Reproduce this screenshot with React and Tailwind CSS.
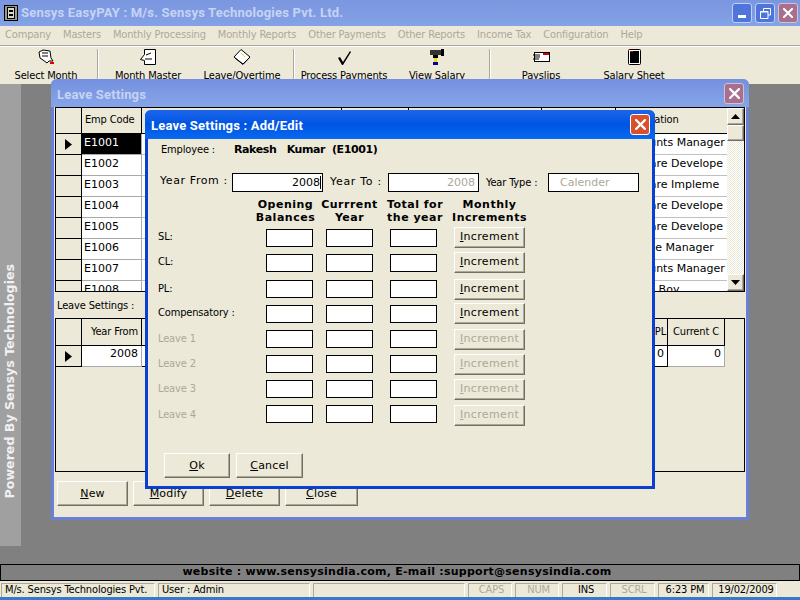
import React from 'react';

const ui = "font-['DejaVu_Sans_Condensed','Roboto',sans-serif] tracking-[-0.15px]";
const dv = "font-['DejaVu_Sans',sans-serif]";
const head = "font-['Roboto',sans-serif] font-bold text-[13px]";

const raised = 'bg-[#ece9d8] border border-t-white border-l-white border-r-[#716f64] border-b-[#716f64] shadow-[inset_-1px_-1px_0_#aca899]';

// toolbar icons, drawn by hand
const IconSelectMonth = () => (
  <svg width="17" height="16" viewBox="0 0 17 16">
    <path d="M1 3 L5 1 L12 2 L13 9 L15 12 L11 12 L9 14 L5 11 L2 9 Z" fill="#fff" stroke="#000" />
    <path d="M4 4 L10 4 M4 7 L10 7" stroke="#000" />
    <rect x="12" y="13" width="4" height="2" fill="#e00000" />
  </svg>
);
const IconMonthMaster = () => (
  <svg width="17" height="16" viewBox="0 0 17 16">
    <path d="M4.5 .5 H15.5 V15.5 H4.5 V11.5 L.5 10.5 L4.5 5.5 Z" fill="#fff" stroke="#000" />
    <path d="M6 6 L11 4 M5 10 H12" stroke="#000" />
  </svg>
);
const IconLeave = () => (
  <svg width="18" height="16" viewBox="0 0 18 16">
    <path d="M8 .5 L17 8 L10 15.5 L1 8 Z" fill="#fff" stroke="#000" />
    <path d="M2 9 L10 15 L16 9" fill="none" stroke="#000" />
    <path d="M8 4 L12 8" stroke="#e8e000" />
  </svg>
);
const IconCheck = () => (
  <svg width="15" height="15" viewBox="0 0 15 15">
    <path d="M1 8 L3 7 L6 12 L13 1 L14 2 L6 15 L5 15 Z" fill="#000" />
  </svg>
);
const IconViewSalary = () => (
  <svg width="15" height="17" viewBox="0 0 15 17">
    <rect x="0" y="1" width="11" height="5" fill="#333" />
    <rect x="11" y="0" width="3" height="7" fill="#000" />
    <rect x="3" y="6" width="5" height="3" fill="#000" />
    <rect x="4" y="9" width="3" height="4" fill="#f0e000" />
    <rect x="3" y="13" width="5" height="3" fill="#0000a0" />
  </svg>
);
const IconPayslips = () => (
  <svg width="17" height="10" viewBox="0 0 17 10">
    <rect x="1.5" y=".5" width="15" height="9" fill="#fff" stroke="#000" />
    <rect x="10" y="1" width="6" height="2" fill="#d00000" />
    <path d="M0 3 H7 M1 5 H7 M0 7 H6" stroke="#000" />
  </svg>
);
const IconSalarySheet = () => (
  <svg width="13" height="16" viewBox="0 0 13 16">
    <rect x=".5" y=".5" width="12" height="15" rx="1" fill="#fff" stroke="#000" />
    <rect x="2" y="2" width="9" height="12" fill="#000" />
    <rect x="2" y="2" width="3" height="1" fill="#e00000" />
  </svg>
);
const IconApp = () => (
  <svg width="14" height="16" viewBox="0 0 14 16">
    <rect x=".5" y=".5" width="13" height="15" fill="#9a9a8c" stroke="#000" />
    <rect x="3.5" y="2.5" width="7" height="11" fill="#d8d8c8" stroke="#000" />
    <path d="M5 6 H9 M5 10 H9" stroke="#000" strokeWidth="2" />
  </svg>
);

const WinX = ({ size = 10 }) => (
  <svg width={size} height={size} viewBox="0 0 10 10">
    <path d="M1 1 L9 9 M9 1 L1 9" stroke="#fff" strokeWidth="2" strokeLinecap="square" />
  </svg>
);

const toolbar = [
  { w: 'w-[92px]', label: 'Select Month', icon: <IconSelectMonth /> },
  { sep: true, w: 'ml-[5px] mr-[1px]' },
  { w: 'w-[96px]', label: 'Month Master', icon: <IconMonthMaster /> },
  { w: 'w-[92px]', label: 'Leave/Overtime', icon: <IconLeave /> },
  { sep: true, w: 'ml-[5px] mr-[1px]' },
  { w: 'w-[96px]', label: 'Process Payments', icon: <IconCheck /> },
  { w: 'w-[90px]', label: 'View Salary', icon: <IconViewSalary /> },
  { sep: true, w: 'ml-[7px] mr-[1px]' },
  { w: 'w-[98px]', label: 'Payslips', icon: <IconPayslips /> },
  { w: 'w-[88px]', label: 'Salary Sheet', icon: <IconSalarySheet /> },
];

const menus = ['Company', 'Masters', 'Monthly Processing', 'Monthly Reports', 'Other Payments', 'Other Reports', 'Income Tax', 'Configuration', 'Help'];

// the grid cuts long designations off, so they are kept as shown
const employees = [
  ['E1001', 'Accounts Manager', 'pl-[7px]'],
  ['E1002', 'Software Develope', 'pl-[3px]'],
  ['E1003', 'Software Impleme', 'pl-[3px]'],
  ['E1004', 'Software Develope', 'pl-[3px]'],
  ['E1005', 'Software Develope', 'pl-[3px]'],
  ['E1006', 'Office Manager', 'pl-[14px]'],
  ['E1007', 'Accounts Manager', 'pl-[7px]'],
  ['E1008', 'Office Boy', 'pl-[7px]'],
];

const leaveRows = [
  { label: 'SL:', row: 'mt-[3px]', box: 'mt-[2px]', on: true },
  { label: 'CL:', row: 'mt-[4px]', box: 'mt-[2px]', on: true },
  { label: 'PL:', row: 'mt-[6px]', box: 'mt-[1px]', on: true },
  { label: 'Compensatory :', row: 'mt-[3px]', box: 'mt-[2px]', on: true },
  { label: 'Leave 1', row: 'mt-[5px]', box: 'mt-[1px]' },
  { label: 'Leave 2', row: 'mt-[4px]', box: 'mt-[1px]' },
  { label: 'Leave 3', row: 'mt-[4px]', box: 'mt-[1px]' },
  { label: 'Leave 4', row: 'mt-[5px]', box: 'mt-0' },
];

const Arrow = () => (
  <svg width="7" height="11" viewBox="0 0 7 11"><path d="M0 0 L7 5.5 L0 11 Z" fill="#000" /></svg>
);

const Btn = ({ k, rest, className }) => (
  <button className={`${raised} ${dv} text-[11px] tracking-[0.2px] text-black flex items-center justify-center pt-[2px] ${className}`}>
    <span><u>{k}</u>{rest}</span>
  </button>
);

const HeadCell = ({ className, children }) => (
  <div className={`${ui} text-[11px] border-r border-black flex items-center ${className}`}>{children}</div>
);

export default function App() {
  return (
    <div className="relative w-[800px] h-[600px] overflow-hidden flex flex-col bg-[#808080]">
      {/* main title bar */}
      <div className="h-[26px] flex items-center bg-gradient-to-b from-[#7a96df] to-[#84a2e6] pl-[4px] pr-[2px]">
        <IconApp />
        <span className={`${head} ml-[3px] text-[#c6d3f4] tracking-[0.2px]`}>Sensys EasyPAY : M/s. Sensys Technologies Pvt. Ltd.</span>
        <div className="ml-auto flex gap-[3px]">
          <div className="w-[20px] h-[20px] rounded-[3px] border border-[#c0d0f0] bg-[#4f74dc] flex items-end justify-center pb-[4px]">
            <div className="w-[8px] h-[3px] bg-white" />
          </div>
          <div className="w-[20px] h-[20px] rounded-[3px] border border-[#c0d0f0] bg-[#4f74dc] flex items-center justify-center">
            <svg width="11" height="11" viewBox="0 0 11 11"><path d="M3.5 3 V.5 H10.5 V7 H8 M.5 3.5 H8 V10.5 H.5 Z M.5 4 H8" fill="none" stroke="#fff" /></svg>
          </div>
          <div className="w-[20px] h-[20px] rounded-[3px] border border-[#d8c0c8] bg-[#a7708f] flex items-center justify-center">
            <WinX />
          </div>
        </div>
      </div>

      {/* menu */}
      <div className={`${ui} h-[19px] bg-[#ece9d8] flex items-center gap-[12px] pl-[5px] text-[11px] text-[#aca899]`}>
        {menus.map(m => <span key={m}>{m}</span>)}
      </div>
      <div className="h-[2px] bg-[#ece9d8] border-t border-[#aca899] shadow-[inset_0_1px_0_#fff]" />

      {/* toolbar */}
      <div className="h-[37px] bg-[#ece9d8] flex">
        {toolbar.map((t, i) => t.sep ? (
          <div key={i} className={`w-[2px] h-[33px] mt-[2px] border-l border-[#aca899] border-r border-r-white ${t.w}`} />
        ) : (
          <div key={i} className={`${t.w} flex flex-col items-center`}>
            <div className="h-[20px] flex items-center justify-center mt-[2px]">{t.icon}</div>
            <span className={`${ui} text-[11px] text-black whitespace-nowrap mt-[2px]`}>{t.label}</span>
          </div>
        ))}
      </div>

      {/* desktop */}
      <div className="flex-1">
        <div className="w-[21px] h-[462px] bg-[#a0a0a0] flex items-end justify-center pb-[48px] pr-[1px]">
          <span className={`${dv} [writing-mode:vertical-rl] rotate-180 text-[12.6px] font-bold text-[#f0f0f0] whitespace-nowrap`}>Powered By Sensys Technologies</span>
        </div>
      </div>

      {/* website line */}
      <div className={`${dv} h-[17px] border border-black bg-[#808080] flex items-center justify-center pr-[6px] text-[11px] font-bold text-black tracking-[0.25px]`}>
        website : www.sensysindia.com, E-mail :support@sensysindia.com
      </div>

      {/* status bar */}
      <div className={`${ui} h-[16px] bg-[#ece9d8] flex gap-[3px] pl-[1px] pt-[2px] text-[11px] text-black`}>
        {[
          ['w-[154px]', 'M/s. Sensys Technologies Pvt.', ''],
          ['w-[152px]', 'User : Admin', ''],
          ['w-[152px]', '', ''],
          ['w-[44px] justify-center', 'CAPS', 'text-[#aca899]'],
          ['w-[44px] justify-center', 'NUM', 'text-[#aca899]'],
          ['w-[45px] justify-center', 'INS', ''],
          ['w-[45px] justify-center', 'SCRL', 'text-[#aca899]'],
          ['w-[51px] justify-center', '6:23 PM', ''],
          ['w-[65px] justify-center', '19/02/2009', ''],
        ].map(([w, text, color], i) => (
          <div key={i} className={`${w} ${color} h-[14px] flex items-center pl-[3px] border-t border-l border-[#aca899] border-r border-r-white overflow-hidden whitespace-nowrap`}>{text}</div>
        ))}
      </div>
      <div className="h-[3px] bg-[#3a78c8]" />

      {/* Leave Settings window */}
      <div className="absolute left-[51px] top-[79px] w-[698px] h-[441px] flex flex-col rounded-t-[6px] border-x-[3px] border-b-[3px] border-[#6a80d8] bg-[#ece9d8]">
        <div className="-mx-[3px] h-[28px] shrink-0 flex items-center justify-between rounded-t-[6px] bg-gradient-to-b from-[#7590e0] to-[#86a5e8] pl-[6px] pr-[5px]">
          <span className={`${head} pt-[3px] text-[#c6d3f4] tracking-[0.2px]`}>Leave Settings</span>
          <div className="w-[20px] h-[21px] rounded-[3px] border border-[#d8c0c8] bg-[#a7708f] flex items-center justify-center"><WinX size={11} /></div>
        </div>

        {/* employee grid */}
        <div className="ml-[1px] w-[690px] h-[185px] shrink-0 border border-black flex bg-[#808080] overflow-hidden">
          <div className="w-[671px] shrink-0 flex flex-col">
            <div className="h-[26px] shrink-0 flex bg-[#ece9d8] border-b border-black">
              <HeadCell className="w-[26px]" />
              <HeadCell className="w-[60px] pl-[3px]">Emp Code</HeadCell>
              <HeadCell className="w-[200px]" />
              <HeadCell className="w-[67px]" />
              <HeadCell className="w-[133px]" />
              <HeadCell className="w-[74px]" />
              <div className={`${ui} text-[11px] flex-1 flex items-center pl-[5px]`}>Designation</div>
            </div>
            {employees.map(([code, job, offset], i) => (
              <div key={code} className="h-[21px] shrink-0 flex">
                <div className="w-[26px] shrink-0 bg-[#ece9d8] border-r border-b border-black flex items-center justify-center">
                  {i === 0 && <Arrow />}
                </div>
                <div className={`${dv} w-[60px] shrink-0 text-[11px] pl-[2px] pt-[1px] border-r border-b border-[#a9a9a9] ${i === 0 ? 'bg-black text-white' : 'bg-white text-black'}`}>{code}</div>
                <div className="w-[474px] shrink-0 bg-white border-b border-[#c0c0c0]" />
                <div className={`${dv} ${offset} flex-1 bg-white text-[11px] text-black pt-[1px] border-b border-[#c0c0c0] whitespace-nowrap overflow-hidden`}>{job}</div>
              </div>
            ))}
          </div>
          {/* scrollbar */}
          <div className="w-[17px] shrink-0 flex flex-col bg-[repeating-conic-gradient(#ece9d8_0_25%,#ffffff_0_50%)] bg-[length:2px_2px]">
            <div className={`${raised} h-[17px] flex items-center justify-center`}>
              <svg width="9" height="5" viewBox="0 0 9 5"><path d="M4.5 0 L9 5 H0 Z" fill="#000" /></svg>
            </div>
            <div className={`${raised} h-[16px]`} />
            <div className={`${raised} h-[17px] mt-auto flex items-center justify-center`}>
              <svg width="9" height="5" viewBox="0 0 9 5"><path d="M4.5 5 L9 0 H0 Z" fill="#000" /></svg>
            </div>
          </div>
        </div>

        <div className={`${ui} h-[26px] shrink-0 pl-[3px] pt-[7px] text-[11px] text-black leading-[14px]`}>Leave Settings :</div>

        {/* leave grid */}
        <div className="ml-[1px] w-[690px] h-[154px] shrink-0 border border-black flex flex-col">
          <div className="h-[27px] shrink-0 flex border-b border-black w-[669px]">
            <HeadCell className="w-[26px]" />
            <HeadCell className="w-[60px] justify-center pl-[6px]">Year From</HeadCell>
            <HeadCell className="w-[526px] justify-end pr-[1px]">PL</HeadCell>
            <HeadCell className="w-[57px] justify-center">Current C</HeadCell>
          </div>
          <div className="h-[21px] shrink-0 flex w-[669px]">
            <div className="w-[26px] shrink-0 border-r border-b border-black flex items-center justify-center"><Arrow /></div>
            <div className={`${dv} w-[60px] shrink-0 bg-white text-[11px] text-right pr-[3px] border-r border-b border-[#a9a9a9]`}>2008</div>
            <div className={`${dv} w-[526px] shrink-0 bg-white text-[11px] text-right pr-[3px] border-r border-b border-black`}>0</div>
            <div className={`${dv} w-[57px] shrink-0 bg-white text-[11px] text-right pr-[3px] border-r border-b border-[#a9a9a9]`}>0</div>
          </div>
        </div>

        {/* window buttons */}
        <div className="flex gap-[5px] pl-[3px] pt-[9px]">
          <Btn k="N" rest="ew" className="w-[71px] h-[25px]" />
          <Btn k="M" rest="odify" className="w-[71px] h-[25px]" />
          <Btn k="D" rest="elete" className="w-[71px] h-[25px]" />
          <Btn k="C" rest="lose" className="w-[73px] h-[25px]" />
        </div>
      </div>

      {/* Add/Edit dialog */}
      <div className="absolute left-[145px] top-[110px] w-[510px] h-[379px] flex flex-col rounded-t-[6px] border-x-[3px] border-b-[3px] border-[#0a3fd0] bg-[#ece9d8]">
        <div className="-mx-[3px] h-[29px] shrink-0 flex items-center justify-between rounded-t-[6px] bg-gradient-to-b from-[#1a66ea] via-[#0054e3] to-[#0a6af0] pl-[6px] pr-[5px]">
          <span className={`${head} pt-[3px] text-white tracking-[0.2px]`}>Leave Settings : Add/Edit</span>
          <div className="w-[20px] h-[21px] rounded-[3px] border border-white bg-[#d9512c] flex items-center justify-center"><WinX size={11} /></div>
        </div>

        <div className="flex pl-[13px] h-[22px] items-center shrink-0">
          <span className={`${ui} w-[73px] text-[11px]`}>Employee :</span>
          <span className={`${dv} text-[11px] font-bold whitespace-pre tracking-[-0.4px]`}>Rakesh   Kumar  (E1001)</span>
        </div>

        <div className="flex items-center pl-[12px] mt-[12px] h-[19px] shrink-0">
          <span className={`${dv} w-[72px] -mt-[2px] text-[11px] tracking-[0.6px] whitespace-nowrap`}>Year From :</span>
          <div className={`${dv} w-[91px] h-[19px] border border-black bg-white text-[11px] text-right pr-[1px] leading-[17px]`}>2008<span className="border-r border-black" /></div>
          <span className={`${dv} ml-[7px] w-[58px] text-[11px] tracking-[0.7px] whitespace-nowrap`}>Year To :</span>
          <div className={`${dv} w-[91px] h-[19px] border border-black bg-white text-[11px] text-[#aca899] text-right pr-[3px] leading-[17px]`}>2008</div>
          <span className={`${ui} ml-[7px] w-[62px] mt-[2px] text-[11px] whitespace-nowrap`}>Year Type :</span>
          <div className={`${dv} w-[91px] h-[19px] border border-black bg-white text-[11px] text-[#aca899] pl-[11px] leading-[17px]`}>Calender</div>
        </div>

        {/* column heads */}
        <div className={`${dv} grid grid-cols-[108px_47px_13px_47px_17px_47px_17px_71px] pl-[10px] mt-[6px] h-[26px] shrink-0 text-[11px] font-bold text-center leading-[13px] tracking-[0.5px]`}>
          <div />
          <div className="whitespace-nowrap flex justify-center pr-[8px]"><span>Opening<br />Balances</span></div>
          <div />
          <div className="whitespace-nowrap flex justify-center"><span>Currrent<br />Year</span></div>
          <div />
          <div className="whitespace-nowrap flex justify-center pl-[3px]"><span>Total for<br />the year</span></div>
          <div />
          <div className="whitespace-nowrap flex justify-center"><span>Monthly<br />Increments</span></div>
        </div>

        {/* leave rows */}
        {leaveRows.map(r => (
          <div key={r.label} className={`${r.row} flex h-[21px] pl-[10px] shrink-0`}>
            <span className={`${ui} w-[108px] self-center text-[11px] ${r.on ? 'text-black' : 'text-[#aca899]'}`}>{r.label}</span>
            <div className={`w-[47px] h-[18px] border border-black bg-white ${r.box}`} />
            <div className={`w-[47px] h-[18px] border border-black bg-white ml-[13px] ${r.box}`} />
            <div className={`w-[47px] h-[18px] border border-black bg-white ml-[17px] ${r.box}`} />
            <button className={`${raised} ${dv} ml-[17px] w-[71px] h-[21px] text-[11px] tracking-[0.35px] ${r.on ? 'text-black' : 'text-[#aca899]'}`}><u>I</u>ncrement</button>
          </div>
        ))}

        <div className="flex gap-[6px] pl-[16px] mt-[27px]">
          <Btn k="O" rest="k" className="w-[66px] h-[25px]" />
          <Btn k="C" rest="ancel" className="w-[67px] h-[25px]" />
        </div>
      </div>
    </div>
  );
}
